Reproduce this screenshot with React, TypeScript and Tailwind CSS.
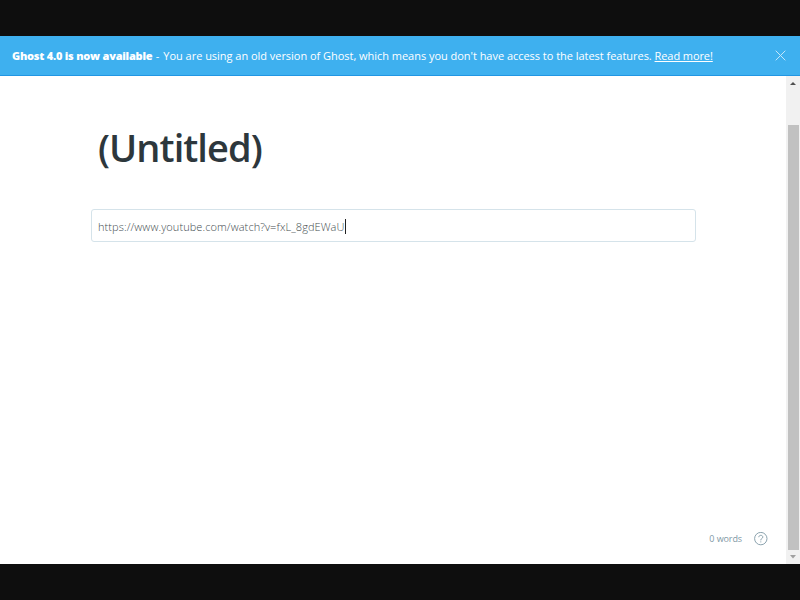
import React from "react";

function Banner() {
  return (
    <header className="flex h-10 shrink-0 items-center justify-between border-b border-[#2196e3] bg-[#3eb0ef] pl-3 pr-[14px] text-[11px] text-white">
      <p className="whitespace-nowrap pt-px leading-4">
        <b className="font-extrabold tracking-[-0.23px]">Ghost 4.0 is now available</b>
        <span className="tracking-[0.6px]"> - </span>
        <span className="tracking-[-0.03px]">You are using an old version of Ghost, which means you don't have access to the latest features. </span>
        <a className="tracking-[-0.08px] underline underline-offset-1">Read more!</a>
      </p>
      <svg className="-mt-px h-[11px] w-[11px]" viewBox="0 0 11 11" fill="none" stroke="#c5e7fa" strokeWidth="1">
        <path d="M.7.7l9.6 9.6M10.3.7L.7 10.3" />
      </svg>
    </header>
  );
}

function Scrollbar() {
  return (
    <aside className="flex w-[14px] shrink-0 flex-col items-center bg-[#f1f1f1] pt-[6px]">
      <svg className="h-[3px] w-[6px]" viewBox="0 0 6 3"><path d="M0 3L3 0l3 3z" fill="#505050" /></svg>
      <div className="ml-px mt-[40px] h-[425px] w-[11px] bg-[#c1c1c1]" />
      <svg className="mt-[5px] h-[4px] w-[6px]" viewBox="0 0 6 4"><path d="M0 0h6L3 3.5z" fill="#a0a0a0" /></svg>
    </aside>
  );
}

export default function App() {
  return (
    <div className="flex h-[600px] w-[800px] flex-col overflow-hidden bg-[#0e0e0e] py-9 font-['Open_Sans','Noto_Sans',sans-serif]">
      <Banner />
      <div className="flex min-h-0 flex-1 bg-white">
        <main className="flex flex-1 flex-col pl-[91px]">
          <h1 className="ml-[7px] mt-[45px] h-[52px] whitespace-nowrap text-[38px] font-semibold leading-[52px] tracking-[-0.95px] text-[#2d373c]">(Untitled)</h1>
          <div className="mt-[36px] flex h-[33px] w-[605px] items-center rounded-[3px] border border-[#d5e3ea] pl-[6px]">
            <span className="whitespace-nowrap pt-[2px] text-[11px] font-light leading-4 tracking-[0.085px] text-[#444d50]">https://www.youtube.com/watch?v=fxL_8gdEWaU</span>
            <span className="mt-px h-[15px] w-px bg-[#222]" />
          </div>
          <footer className="mb-[18px] mr-[18px] mt-auto flex items-center justify-end gap-3">
            <span className="text-[9px] leading-[14px] tracking-[-0.1px] text-[#7f98a5]">0 words</span>
            <svg className="h-[14px] w-[14px]" viewBox="0 0 14 14" fill="none" stroke="#7f98a5" strokeWidth=".9">
              <circle cx="6.8" cy="6.6" r="6.2" />
              <path d="M4.8 5.2c0-1.1.9-1.9 2-1.9s2 .7 2 1.8c0 1.5-2 1.4-2 2.8v.5M6.8 9.4v1" />
            </svg>
          </footer>
        </main>
        <Scrollbar />
      </div>
    </div>
  );
}
